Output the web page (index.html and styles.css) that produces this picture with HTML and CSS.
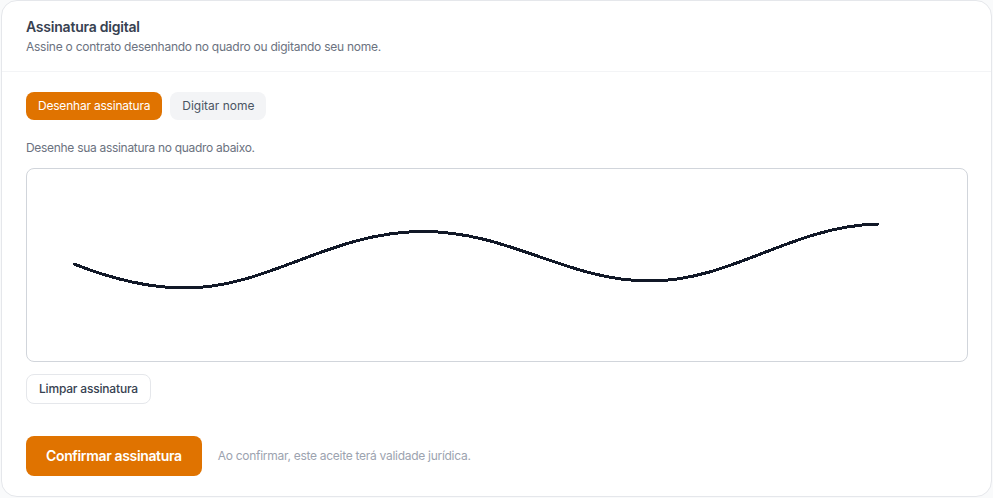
FILE: index.html
```html
<!DOCTYPE html>
<html lang="pt-BR">

<head>
    <meta charset="UTF-8">
    <meta name="viewport" content="width=device-width, initial-scale=1.0">
    <title>Assinatura digital</title>
    <link rel="stylesheet" href="styles.css">
</head>

<body>
    <div class="card">
        <div class="card-head">
            <h2>Assinatura digital</h2>
            <p>Assine o contrato desenhando no quadro ou digitando seu nome.</p>
        </div>
        <div class="card-body">
            <div class="tabs">
                <button class="tab active">Desenhar assinatura</button>
                <button class="tab">Digitar nome</button>
            </div>
            <p class="hint">Desenhe sua assinatura no quadro abaixo.</p>
            <div class="board">
                <svg class="stroke" viewBox="0 0 940 192" width="940" height="192">
                    <path class="ink" d="M47 95 C85 110 120 119 158 119 C242 119 303 62.5 396 62.5 C483 62.5 540 112 623 112 C705 112 765 57 851 55" />
                </svg>
            </div>
            <button class="clear">Limpar assinatura</button>
            <div class="confirm-row">
                <button class="confirm">Confirmar assinatura</button>
                <span class="note">Ao confirmar, este aceite terá validade jurídica.</span>
            </div>
        </div>
    </div>
</body>

</html>
```

FILE: styles.css
```css
* {
    margin: 0;
    padding: 0;
    box-sizing: border-box;
}

body {
    background: #f9fafb;
    font-family: Inter, "Liberation Sans", sans-serif;
    padding: 0 1px;
}

button {
    font-family: inherit;
    cursor: pointer;
}

.card {
    width: 991px;
    height: 497px;
    background: #fff;
    border: 1px solid #e5e7eb;
    border-radius: 16px;
}

.card-head {
    height: 71px;
    padding: 17px 24px 0;
    border-bottom: 1px solid #f3f4f6;
}

.card-head h2 {
    font-size: 14px;
    line-height: 17px;
    font-weight: 600;
    letter-spacing: -0.22px;
    color: #374151;
}

.card-head p {
    margin-top: 4px;
    font-size: 12px;
    line-height: 16px;
    letter-spacing: -0.25px;
    color: #6b7280;
}

.card-body {
    padding: 20px 24px 0;
}

.tabs {
    display: flex;
    gap: 8px;
}

.tab {
    height: 28px;
    padding: 0 12px 2px;
    border: 0;
    border-radius: 8px;
    background: #f3f4f6;
    color: #4b5563;
    font-size: 12px;
}

.tab.active {
    background: #e07300;
    color: #fff;
    letter-spacing: -0.21px;
}

.hint {
    margin-top: 20px;
    font-size: 12px;
    line-height: 16px;
    letter-spacing: -0.3px;
    color: #6b7280;
}

.board {
    width: 942px;
    height: 194px;
    margin-top: 12px;
    border: 1px solid #d1d5db;
    border-radius: 8px;
    background: #fff;
}

.stroke {
    display: block;
}

.ink {
    fill: none;
    stroke: #111827;
    stroke-width: 3;
    stroke-linecap: round;
    shape-rendering: crispEdges;
}

.clear {
    display: block;
    height: 30px;
    margin-top: 12px;
    padding: 0 12px 2px;
    background: #fff;
    border: 1px solid #e5e7eb;
    border-radius: 8px;
    color: #374151;
    font-size: 12px;
    font-weight: 500;
    letter-spacing: -0.19px;
}

.confirm-row {
    display: flex;
    align-items: center;
    gap: 16px;
    margin-top: 32px;
}

.confirm {
    height: 40px;
    padding: 0 20px 2px;
    border: 0;
    border-radius: 8px;
    background: #e07300;
    color: #fff;
    font-size: 14px;
    font-weight: 600;
    letter-spacing: -0.35px;
}

.note {
    font-size: 12px;
    letter-spacing: -0.28px;
    color: #9ca3af;
    margin-bottom: 1px;
}
```
